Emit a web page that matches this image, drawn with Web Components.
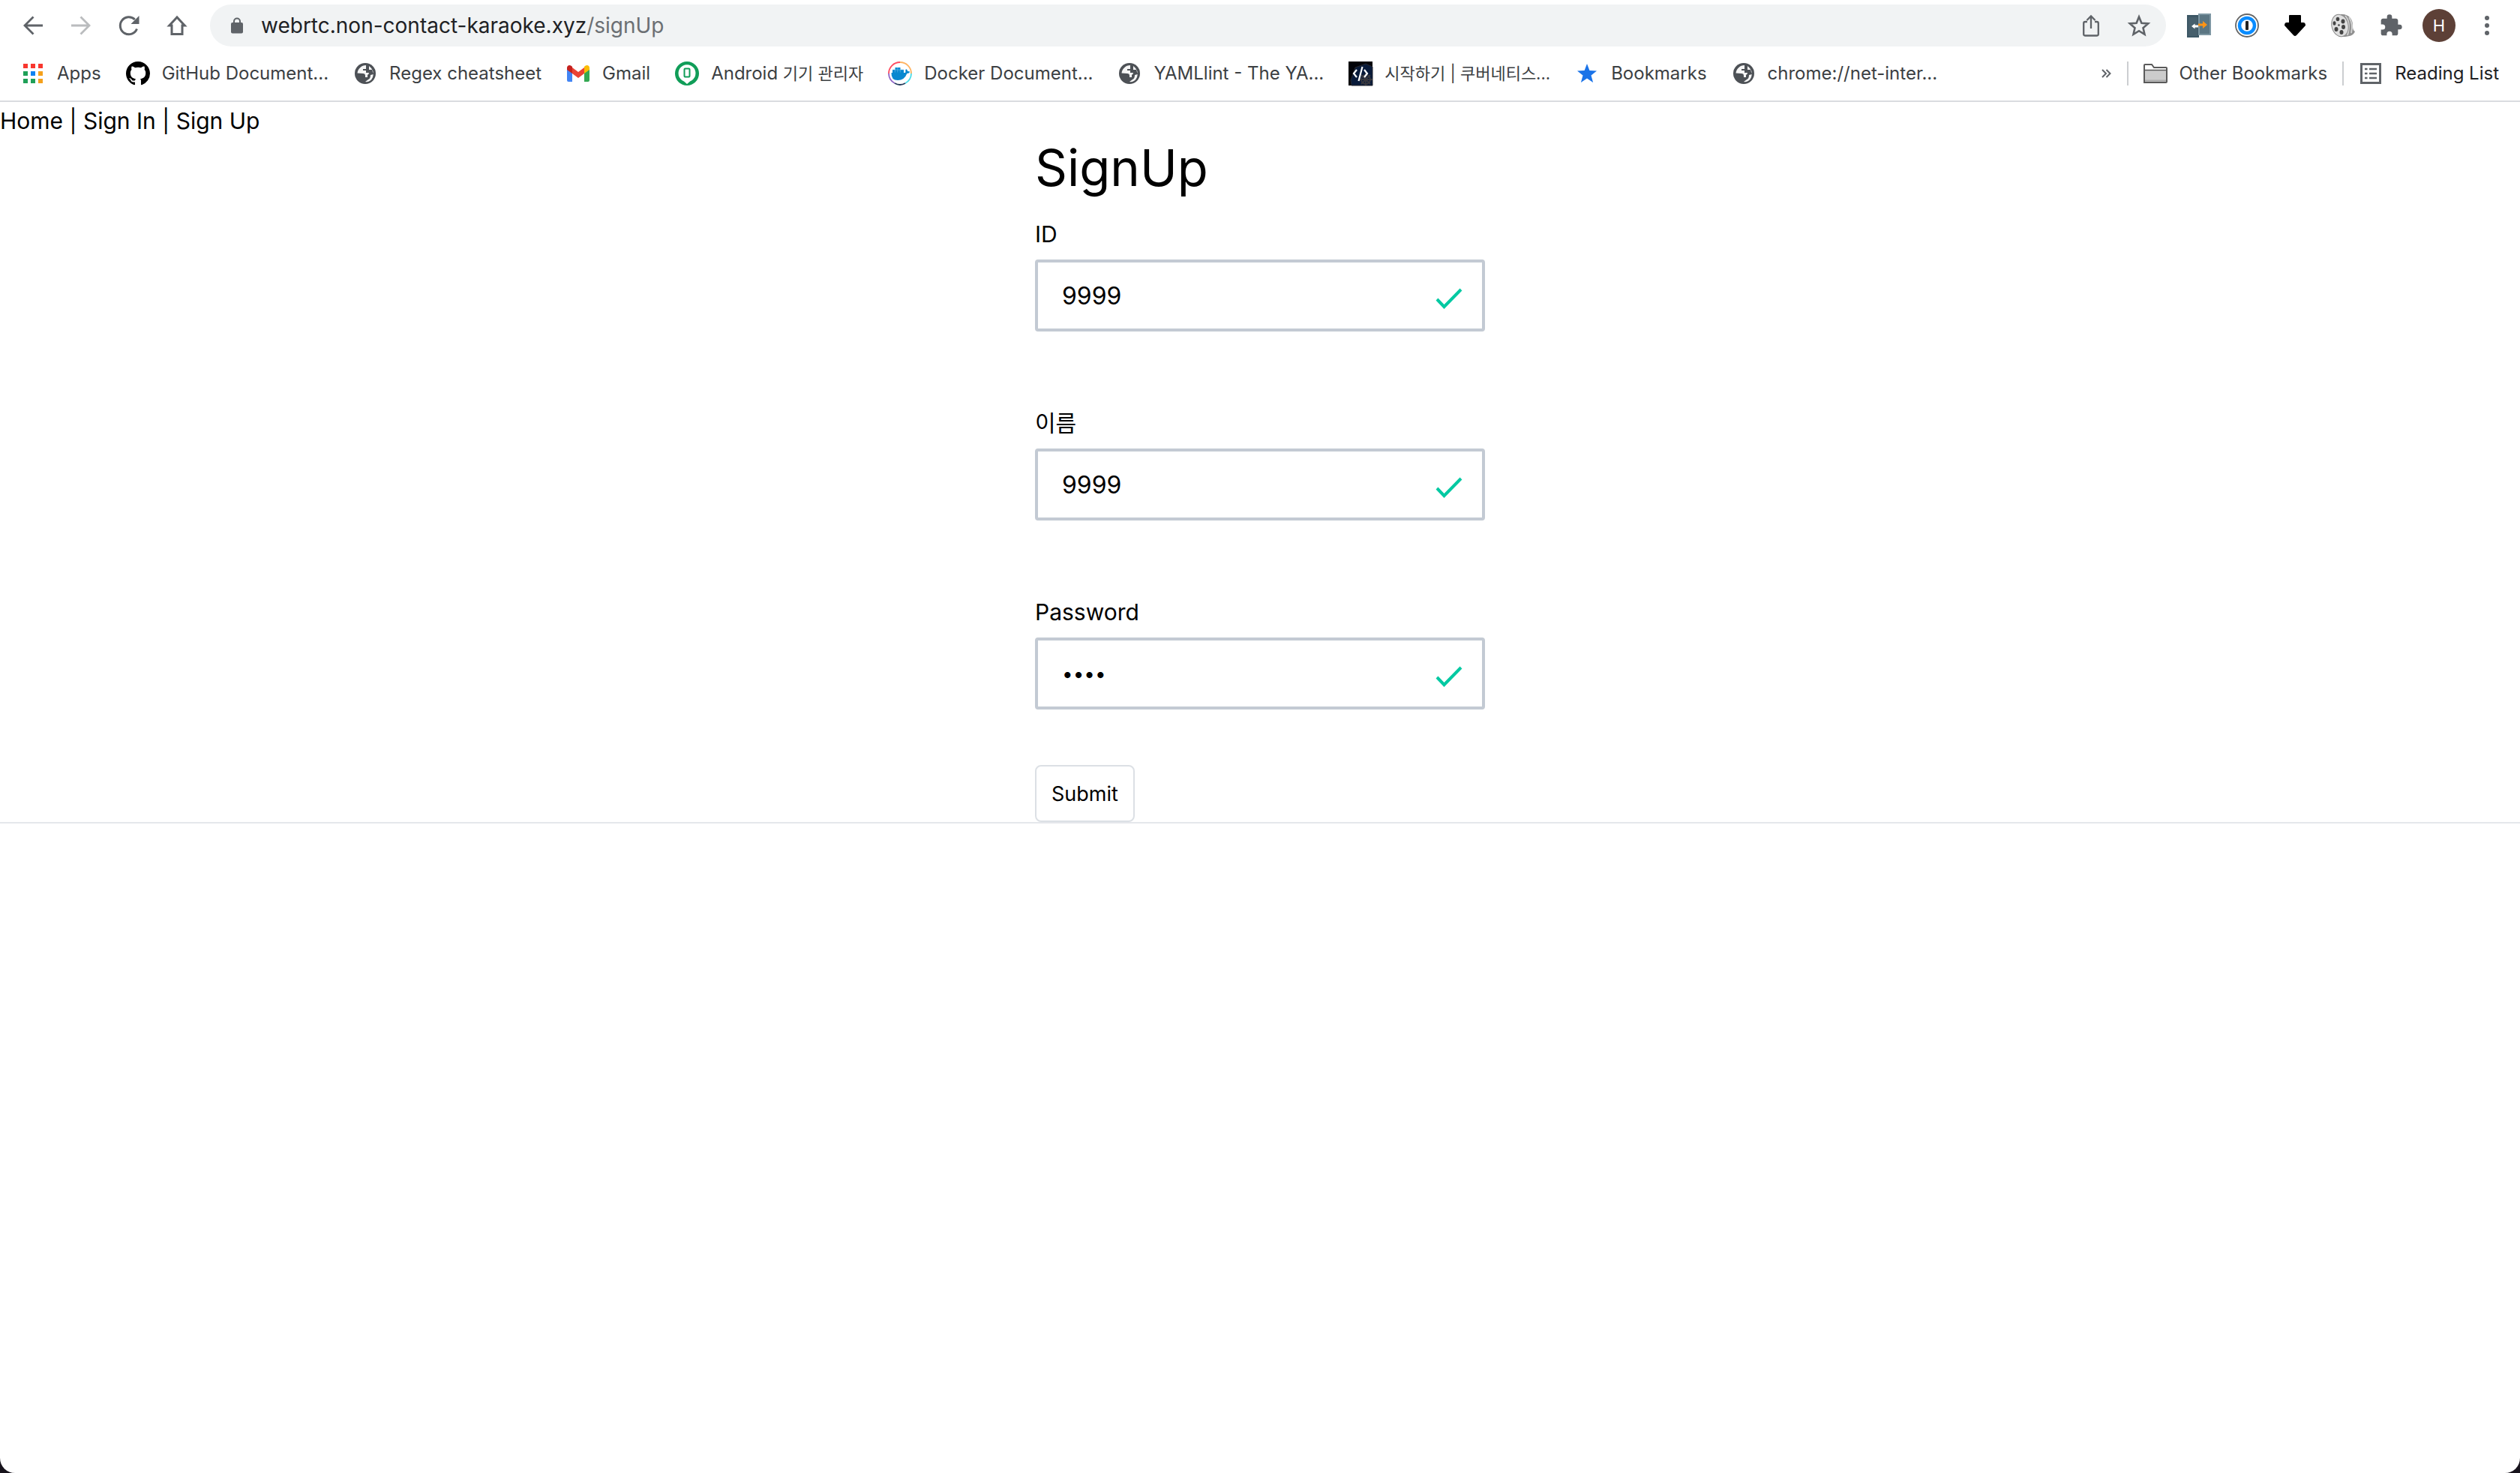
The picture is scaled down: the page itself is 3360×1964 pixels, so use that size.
<!DOCTYPE html>
<html lang="en"><head><meta charset="utf-8"><title>SignUp</title>
<style>
html{background:#17131c;height:100%}
body{margin:0;min-height:100%;background:#fff;border-radius:0 0 20px 20px;overflow:hidden;font-family:Inter,"Noto Sans CJK KR",sans-serif;color:#000}
</style></head><body>
<browser-bar></browser-bar>
<bookmarks-bar></bookmarks-bar>
<signup-page></signup-page>
<script>
const ICONS={
back:['0 0 26 26','<path d="M26 13H2.500M13.500 1.500L2 13l11.500 11.500" fill="none" stroke="#5f6368" stroke-width="2.800"/>'],
forward:['0 0 26 26','<path d="M0 13h23.500M12.500 1.500L24 13 12.500 24.500" fill="none" stroke="#babcbe" stroke-width="2.800"/>'],
reload:['0 0 28 26','<path d="M24.500 17.500A11.500 11.500 0 1 1 21.800 5" fill="none" stroke="#5f6368" stroke-width="3"/><path d="M27.500 0v11h-11z" fill="#5f6368"/>'],
home:['0 0 26 26','<path d="M13 2L2.800 13H6v11.500h14V13h3.200z" fill="none" stroke="#5f6368" stroke-width="3"/>'],
lock:['0 0 16 22','<path d="M4 9V5.500a4 4 0 0 1 8 0V9" fill="none" stroke="#5f6368" stroke-width="2"/><rect y="7" width="16" height="14.500" rx="2" fill="#5f6368"/>'],
share:['0 0 22 29','<path d="M6 9H3.500Q1.200 9 1.200 11v14.500q0 2 2.300 2h15q2.300 0 2.300-2V11q0-2-2.300-2H16M11 18V2M5.500 7L11 1.500 16.500 7" fill="none" stroke="#5f6368" stroke-width="2.300"/>'],
star:['0 0 30 30','<path d="M15 3.500l3.400 8.200 8.800.7-6.700 5.800 2 8.600L15 22.200l-7.500 4.600 2-8.600-6.700-5.800 8.800-.7z" fill="none" stroke="#5f6368" stroke-width="2.600"/>'],
doors:['0 0 32 32','<path d="M0 2h16v30H0z" fill="#3c5765"/><path d="M15 0h17v29H15z" fill="#7d96a2"/><path d="M17 2h13v25H17z" fill="#5b7683"/><path d="M2 5h12v25H2z" fill="#465f6c"/><path d="M6 17l4.500-3.500v2H15v3h-4.500v2z" fill="#fff"/><path d="M15 13.500h6V10l6 5-6 5v-3.500h-6z" fill="#ff9416"/>'],
onepass:['0 0 32 32','<circle cx="16" cy="16" r="15" fill="#fff" stroke="#666" stroke-width="1.800"/><circle cx="16" cy="16" r="10" fill="#fff" stroke="#0a8cff" stroke-width="4.500"/><rect x="14" y="10" width="4" height="12" rx="1" fill="#222"/>'],
down:['0 0 28 28','<path d="M7 0h14q1 0 1 1v9h3q3 0 3 4L16 27q-2 2-4 0L0 14q0-4 3-4h3V1q0-1 1-1z"/>'],
reel:['0 0 32 32','<path d="M13 1c10-1 16 6 16 14 0 4 0 7 3 9-2 5-7 7-16 7z" fill="#909090"/><path d="M19 3q8 9 3 26M24 5q6 9 3 21" stroke="#d4d4d4" stroke-width="1.800" fill="none"/><ellipse cx="12" cy="16" rx="11" ry="15" transform="rotate(-14 12 16)" fill="#dedede" stroke="#8a8a8a"/><g fill="#444"><ellipse cx="9" cy="7.500" rx="2.300" ry="2.800"/><ellipse cx="16" cy="10.500" rx="2.500" ry="3"/><ellipse cx="4.500" cy="13" rx="2" ry="2.800"/><ellipse cx="16.500" cy="18" rx="2.500" ry="3"/><ellipse cx="7" cy="21" rx="2.500" ry="3"/><ellipse cx="14" cy="25" rx="2.500" ry="3"/><circle cx="10.500" cy="15.500" r="1.300"/></g>'],
puzzle:['0 0 24 24','<path fill="#5f6368" d="M20.500 11H19V7c0-1.100-.9-2-2-2h-4V3.500a2.500 2.500 0 0 0-5 0V5H4c-1.100 0-2 .9-2 2v3.800h1.500a2.700 2.700 0 0 1 0 5.400H2V20c0 1.100.9 2 2 2h3.800v-1.500a2.700 2.700 0 0 1 5.400 0V22H17c1.100 0 2-.9 2-2v-4h1.500a2.500 2.500 0 0 0 0-5z"/>'],
dots:['0 0 6 26','<g fill="#5f6368"><circle cx="3" cy="3" r="3"/><circle cx="3" cy="13" r="3"/><circle cx="3" cy="23" r="3"/></g>'],
apps:['0 0 26 26','<path d="M0 0h6v6H0zM10 0h6v6h-6zM20 0h6v6h-6z" fill="#f8372e"/><path d="M0 10h6v6H0zM0 20h6v6H0zM10 20h6v6h-6z" fill="#1fa058"/><path d="M10 10h6v6h-6z" fill="#0f82f0"/><path d="M20 10h6v6h-6zM20 20h6v6h-6z" fill="#f5a11c"/>'],
github:['0 0 16 16','<path d="M8 0C3.580 0 0 3.580 0 8c0 3.540 2.290 6.530 5.470 7.590.4.070.55-.17.55-.38 0-.19-.01-.82-.01-1.490-2.010.37-2.530-.49-2.690-.94-.09-.23-.48-.94-.82-1.130-.28-.15-.68-.52-.01-.53.630-.01 1.080.58 1.230.82.720 1.210 1.870.87 2.330.66.070-.52.280-.87.510-1.070-1.780-.2-3.640-.89-3.640-3.950 0-.87.310-1.590.82-2.150-.08-.2-.36-1.020.08-2.120 0 0 .67-.21 2.200.82.640-.18 1.320-.27 2-.27s1.360.09 2 .27c1.530-1.040 2.200-.82 2.200-.82.440 1.100.160 1.920.080 2.120.510.560.820 1.270.820 2.150 0 3.070-1.870 3.750-3.650 3.950.290.250.540.730.540 1.480 0 1.070-.010 1.930-.010 2.200 0 .210.150.460.550.380A8.010 8.010 0 0 0 16 8c0-4.420-3.580-8-8-8z"/>'],
globe:['0 0 28 28','<circle cx="14" cy="14" r="14" fill="#4d5156"/><path d="M15 3c-6 0-11 5-11.500 10.500L11 14q3 0 3 3v2h3v-3q2-1 2-3h-4v-3h-4V8h4zM19 4v5h4l2 6-4 1q0 5-3 6l-4 3q7 1 10-6 3-9-5-15z" fill="#fff" opacity=".95"/>'],
gmail:['0 0 30 22','<path d="M0 4v16q0 2 2 2h5V9z" fill="#4285f4"/><path d="M23 9v13h5q2 0 2-2V4z" fill="#34a853"/><path d="M7 3l8 6 8-6v8l-8 6-8-6z" fill="#ea4335"/><path d="M0 3.500C0 0 3.500-1 6 1l1 1v9L0 6z" fill="#c5221f"/><path d="M30 3.500C30 0 26.500-1 24 1l-1 1v9l7-5z" fill="#fbbc04"/>'],
android:['0 0 32 32','<circle cx="16" cy="16" r="16" fill="#109d58"/><path d="M16 30l-4-3.500A11.500 11.500 0 1 1 20 26.500z" fill="#fff"/><rect x="12.500" y="9.500" width="7" height="11" rx="1" fill="none" stroke="#109d58" stroke-width="2"/>'],
docker:['0 0 32 32','<g fill="none" stroke-width="1.800"><path d="M16 1A15 15 0 0 0 1 16" stroke="#ff4c60"/><path d="M16 1a15 15 0 0 1 15 15" stroke="#ffb463"/><path d="M31 16a15 15 0 0 1-8 13" stroke="#48dce8"/><path d="M9 29A15 15 0 0 1 1 16" stroke="#8d64c7"/><path d="M9 29q7 4 14 0" stroke="#24395a"/></g><path d="M4.500 15H22q1.500 0 1.500-1-.8-2 .5-4 2 1 2.300 3 1.700-.3 3 .8-1 2.200-4 2.200Q22 25 13 25q-9 0-8.500-10z" fill="#0888d0"/><path d="M6 11h15v4.500H6zM9.500 8h7v3h-7z" fill="#0888d0"/><path d="M9.300 11v3.500M12.800 8v6.500M16.300 11v3.500M6 11h15" stroke="#7cc2ea" stroke-width=".5"/>'],
kube:['0 0 32 32','<path d="M0 0h32v32H0z" fill="#020309"/><path d="M9 8l14-5 9 4v25H4L3 25z" fill="#081a3a" stroke="#26262c"/><g fill="none" stroke="#38383e" stroke-width="1.800"><circle cx="23" cy="24" r="6"/><path d="M23 15v17M14 24h18M17 18l12 12M29 18L17 30"/></g><path d="M11 11l-4 5 4 5M21 11l4 5-4 5M18.500 7l-5 19" fill="none" stroke="#fff" stroke-width="2.200"/>'],
bluestar:['0 0 28 28','<path d="M14 1l3.400 9 9.600.5-7.500 6 2.600 9.500L14 20.500 5.900 26l2.600-9.500-7.500-6 9.600-.5z" fill="#1a73e8"/>'],
folder:['0 0 32 26','<path d="M1 25V2q0-1 1-1h9l3 4h16q1 0 1 1v18q0 1-1 1z" fill="#fff" stroke="#5a5a5a" stroke-width="2"/><path d="M2 9h28v15H2z" fill="#ccc"/><path d="M1 8.500h30" stroke="#5a5a5a" stroke-width="1.500"/><path d="M2 22.500h28" stroke="#aaa" stroke-width="2"/>'],
list:['0 0 28 28','<path d="M1.500 1.500h25v25h-25z" fill="none" stroke="#5f6368" stroke-width="3"/><path d="M6 8h3.500M12 8h10M6 14h3.500M12 14h10M6 20h3.500M12 20h10" stroke="#5f6368" stroke-width="2.600"/>'],
more:['0 0 12 12','<path d="M1 1l5 5-5 5M6.500 1l5 5-5 5" fill="none" stroke="#5f6368" stroke-width="2"/>'],
check:['0 0 36 28','<path d="M2 15l9.500 10L34 2" fill="none" stroke="#00c9a2" stroke-width="4"/>']
};
const make=(tag,html)=>customElements.define(tag,class extends HTMLElement{
 connectedCallback(){if(this.shadowRoot)return;this.attachShadow({mode:'open'}).innerHTML=typeof html==='function'?html(this):html;}
});
make('ui-icon',e=>{const i=ICONS[e.getAttribute('name')],v=i[0].split(' '),w=e.getAttribute('w')||v[2],h=e.getAttribute('h')||v[3];
 return `<style>:host{display:inline-flex;flex:none}svg{display:block;overflow:visible}</style><svg width="${w}" height="${h}" viewBox="${i[0]}" aria-hidden="true">${i[1]}</svg>`;});
make('tool-button',e=>`<style>:host{display:flex;width:64px;justify-content:center}button{all:unset;display:flex}</style><button aria-label="${e.getAttribute('label')}"><slot></slot></button>`);
make('book-mark',`<style>:host{display:flex;flex:none}a{display:flex;align-items:center;gap:16px;color:inherit;text-decoration:none;white-space:nowrap;line-height:32px}.i{display:flex;width:32px;justify-content:center}::slotted([lang=ko]){font-size:22px}</style><a href="#"><span class="i"><slot name="icon"></slot></span><span><slot></slot></span></a>`);
make('browser-bar',`<style>
:host{display:flex;align-items:center;height:68px;padding:0 12px;font-size:28px}
.pill{display:flex;align-items:center;flex:1;height:56px;border-radius:28px;background:#f1f3f4;margin:0 12px;padding:0 4px 0 28px}
.url{flex:1;margin-left:24px;color:#202124;white-space:nowrap}.url span{color:#6b6f73}
.avatar{display:flex;width:44px;height:44px;border-radius:50%;background:#5d4037;color:#fff;align-items:center;justify-content:center;font-size:22px}
</style>
<tool-button label="Back"><ui-icon name="back"></ui-icon></tool-button>
<tool-button label="Forward"><ui-icon name="forward"></ui-icon></tool-button>
<tool-button label="Reload"><ui-icon name="reload"></ui-icon></tool-button>
<tool-button label="Home"><ui-icon name="home"></ui-icon></tool-button>
<div class="pill"><ui-icon name="lock"></ui-icon><div class="url" role="textbox" tabindex="0" aria-label="Address">webrtc.non-contact-karaoke.xyz<span>/signUp</span></div>
<tool-button label="Share"><ui-icon name="share"></ui-icon></tool-button><tool-button label="Bookmark"><ui-icon name="star"></ui-icon></tool-button></div>
<tool-button label="Session"><ui-icon name="doors"></ui-icon></tool-button>
<tool-button label="Passwords"><ui-icon name="onepass"></ui-icon></tool-button>
<tool-button label="Downloads"><ui-icon name="down"></ui-icon></tool-button>
<tool-button label="Video"><ui-icon name="reel"></ui-icon></tool-button>
<tool-button label="Extensions"><ui-icon name="puzzle" w="32" h="32"></ui-icon></tool-button>
<tool-button label="Profile"><span class="avatar">H</span></tool-button>
<tool-button label="Menu"><ui-icon name="dots"></ui-icon></tool-button>`);
make('bookmarks-bar',()=>{const b=[['apps','Apps'],['github','GitHub Document...',32],['globe','Regex cheatsheet'],['gmail','Gmail'],['android','Android <span lang="ko">기기 관리자</span>'],['docker','Docker Document...'],['globe','YAMLlint - The YA...'],['kube','<span lang="ko">시작하기 | 쿠버네티스...</span>'],['bluestar','Bookmarks'],['globe','chrome://net-inter...']];
return `<style>:host{display:flex;align-items:center;height:68px;padding:0 28px 6px;border-bottom:2px solid #dadce0;box-sizing:border-box;font-size:24px;color:#3c4043}
nav{display:flex;gap:33px;flex:1}.r{display:flex;align-items:center;gap:20px}i{width:2px;height:32px;background:#ccced1}button{all:unset;display:flex;margin-right:2px}.d{color:#202124}</style>
<nav aria-label="Bookmarks">${b.map(([n,t,w])=>`<book-mark><ui-icon slot="icon" name="${n}" ${w?`w="${w}" h="${w}"`:''}></ui-icon>${t}</book-mark>`).join('')}</nav>
<div class="r"><button aria-label="More bookmarks"><ui-icon name="more"></ui-icon></button><i></i><book-mark><ui-icon slot="icon" name="folder"></ui-icon>Other Bookmarks</book-mark><i></i><book-mark class="d"><ui-icon slot="icon" name="list"></ui-icon>Reading List</book-mark></div>`;});
make('form-field',e=>`<style>:host{display:block;height:252px}label{display:block;line-height:48px;margin-bottom:10px;font-size:30px}
.box{display:flex;align-items:center;height:96px;box-sizing:border-box;border:4px solid #c3cad3;border-radius:4px;padding:0 26px 0 32px}
input{flex:1;min-width:0;border:0;outline:0;padding:0;background:none;font:inherit;font-size:32px;color:#000}input[type=password]{font-size:26px}ui-icon{margin-top:8px}</style>
<label for="f">${e.getAttribute('label')}</label><div class="box"><input id="f" type="${e.getAttribute('type')||'text'}" value="9999"><ui-icon name="check"></ui-icon></div>`);
make('signup-page',`<style>:host{display:block;border-bottom:2px solid #e5e7eb}nav{font-size:30px;line-height:50px;height:48px;white-space:pre}a{color:inherit;text-decoration:none}
form{width:600px;margin:0 auto}h1{margin:0 0 24px;font-size:67px;line-height:80px;font-weight:400}form-field:last-of-type{height:228px}
button{display:block;height:76px;box-sizing:border-box;padding:0 20px;border:2px solid #dce0e5;border-radius:8px;background:#fff;font:inherit;font-size:27px;color:#000}</style>
<nav><a href="#">Home</a> | <a href="#">Sign In</a> | <a href="#">Sign Up</a></nav>
<form><h1>SignUp</h1><form-field label="ID"></form-field><form-field label="이름"></form-field><form-field label="Password" type="password"></form-field><button type="button">Submit</button></form>`);
</script></body></html>
